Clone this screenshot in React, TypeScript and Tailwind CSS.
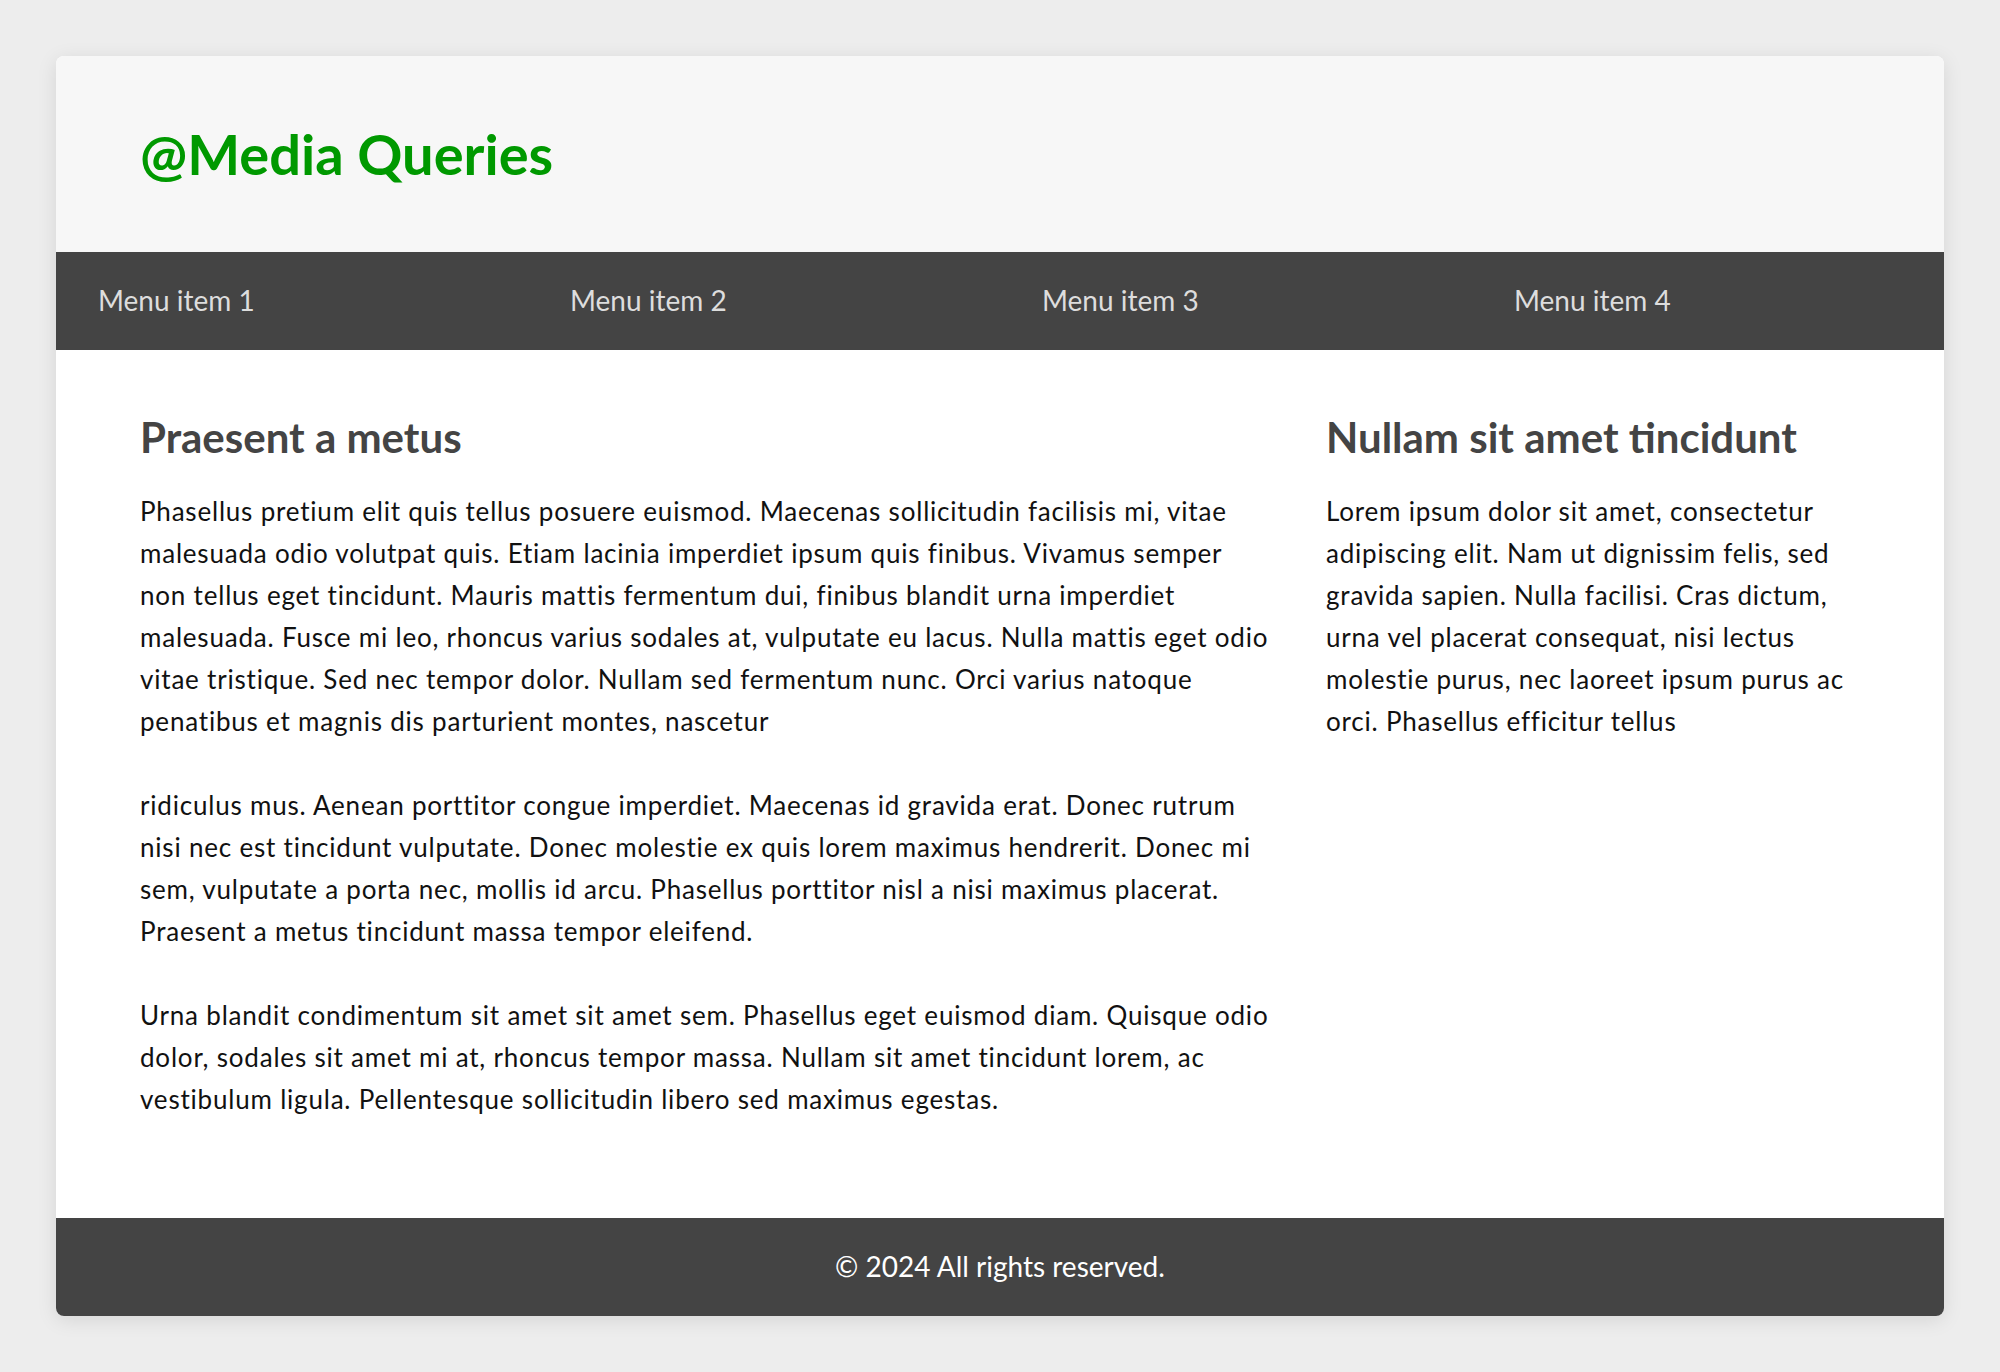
export default function App() {
  const menu = ["Menu item 1", "Menu item 2", "Menu item 3", "Menu item 4"];
  return (
    <div className="min-h-screen bg-[#ededed] p-[56px] font-['Lato',sans-serif]">
      <div className="overflow-hidden rounded-lg bg-white shadow-[0_4px_20px_rgba(0,0,0,0.1)]">
        <header className="flex h-[196px] items-center bg-[#f7f7f7] px-[84px]">
          <h1 className="text-[56px] font-bold leading-[1.2] text-[#009900]">@Media Queries</h1>
        </header>
        <nav className="grid h-[98px] grid-cols-4 items-center bg-[#444444]">
          {menu.map((m) => (
            <a key={m} className="px-[42px] text-[28px] leading-[1.2] text-[#dddddd]">
              {m}
            </a>
          ))}
        </nav>
        <main className="flex gap-[56px] px-[84px] pb-[56px] pt-[62px] text-[26px] leading-[42px] text-[#111111]">
          <section className="w-[1130px] shrink-0">
            <h2 className="mb-[28px] text-[42px] font-bold leading-[50px] text-[#444444]">Praesent a metus</h2>
            <div className="tracking-[0.8px]">
              <p className="mb-[42px]">
                Phasellus pretium elit quis tellus posuere euismod. Maecenas sollicitudin facilisis mi, vitae malesuada odio volutpat quis. Etiam lacinia imperdiet ipsum quis finibus. Vivamus semper non tellus eget tincidunt. Mauris mattis fermentum dui, finibus blandit urna imperdiet malesuada. Fusce mi leo, rhoncus varius sodales at, vulputate eu lacus. Nulla mattis eget odio vitae tristique. Sed nec tempor dolor. Nullam sed fermentum nunc. Orci varius natoque penatibus et magnis dis parturient montes, nascetur
              </p>
              <p className="mb-[42px]">
                ridiculus mus. Aenean porttitor congue imperdiet. Maecenas id gravida erat. Donec rutrum nisi nec est tincidunt vulputate. Donec molestie ex quis lorem maximus hendrerit. Donec mi sem, vulputate a porta nec, mollis id arcu. Phasellus porttitor nisl a nisi maximus placerat. Praesent a metus tincidunt massa tempor eleifend.
              </p>
              <p className="mb-[42px]">
                Urna blandit condimentum sit amet sit amet sem. Phasellus eget euismod diam. Quisque odio dolor, sodales sit amet mi at, rhoncus tempor massa. Nullam sit amet tincidunt lorem, ac vestibulum ligula. Pellentesque sollicitudin libero sed maximus egestas.
              </p>
            </div>
          </section>
          <aside className="min-w-0 flex-1">
            <h2 className="mb-[28px] text-[42px] font-bold leading-[50px] text-[#444444]">Nullam sit amet tincidunt</h2>
            <p className="tracking-[0.8px]">
              Lorem ipsum dolor sit amet, consectetur adipiscing elit. Nam ut dignissim felis, sed gravida sapien. Nulla facilisi. Cras dictum, urna vel placerat consequat, nisi lectus molestie purus, nec laoreet ipsum purus ac orci. Phasellus efficitur tellus
            </p>
          </aside>
        </main>
        <footer className="flex h-[98px] items-center justify-center bg-[#444444] text-[28px] leading-[1.2] text-white">
          © 2024 All rights reserved.
        </footer>
      </div>
    </div>
  );
}
